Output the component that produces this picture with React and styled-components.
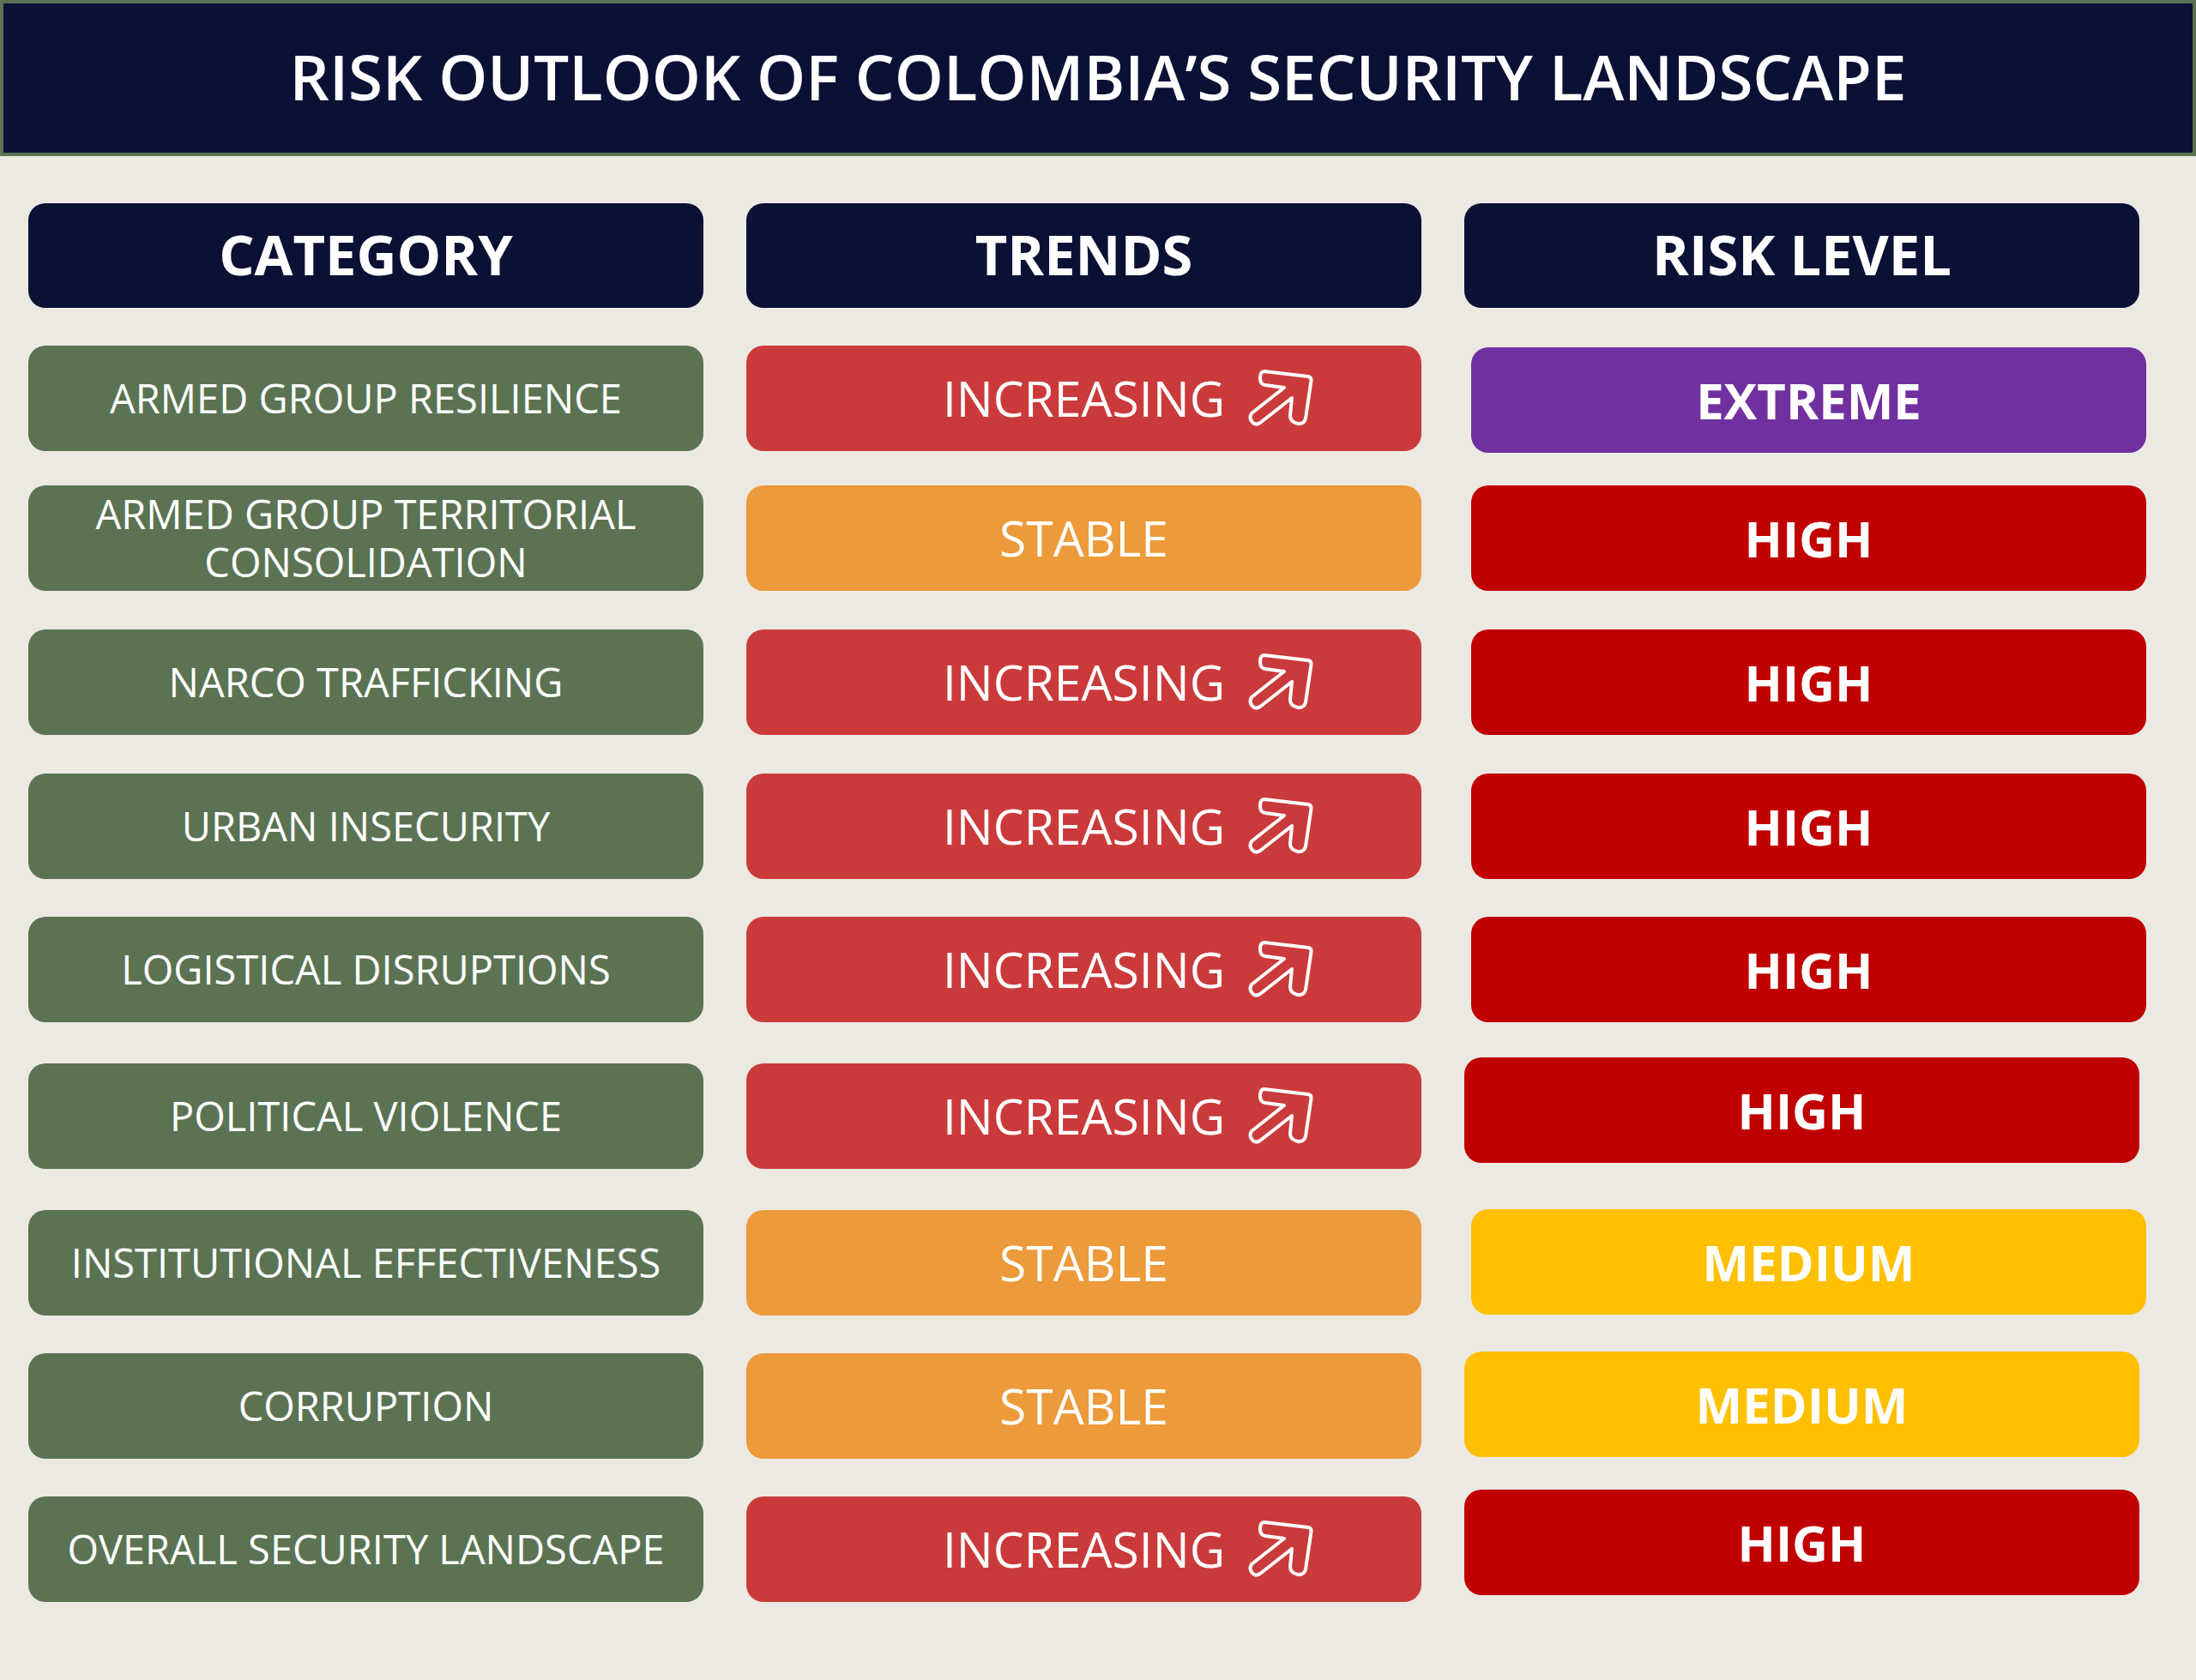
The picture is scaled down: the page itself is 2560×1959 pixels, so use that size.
import React from 'react'
import styled, { createGlobalStyle } from 'styled-components'

const GlobalStyle = createGlobalStyle`
    html, body {
        margin: 0;
        padding: 0;
        background: #ece9e2;
    }
    body {
        font-family: "Open Sans", "Noto Sans", sans-serif;
    }
`;

const Page = styled.div`
    width: 2560px;
    min-height: 1959px;
    background: #ece9e2;
    box-sizing: border-box;
`;

const TitleBar = styled.header`
    height: 182px;
    box-sizing: border-box;
    border: 4px solid #5b7353;
    background: #0b1035;
    color: #ffffff;
    display: flex;
    align-items: center;
    justify-content: center;
    font-size: 72.6px;
    font-weight: 600;
    padding-bottom: 6px;
`;

const Table = styled.section`
    padding: 55px 0 0 33px;
`;

const Row = styled.div`
    display: grid;
    grid-template-columns: repeat(3, 787px);
    column-gap: 50px;
    margin-top: ${props => props.$gap || 0}px;
`;

const Cell = styled.div`
    height: ${props => props.$h || 123}px;
    box-sizing: border-box;
    border-radius: 20px;
    background: ${props => props.$bg};
    color: #ffffff;
    display: flex;
    align-items: center;
    justify-content: center;
    text-align: center;
`;

const HeaderCell = styled(Cell)`
    font-size: 65px;
    font-weight: 700;
    padding-bottom: 4px;
`;

const CategoryCell = styled(Cell)`
    font-size: 47px;
    line-height: 56px;
    padding: 0 30px 2px;
`;

const TrendCell = styled(Cell)`
    font-size: 57px;
    padding-bottom: 2px;
`;

const RiskCell = styled(Cell)`
    font-size: 58px;
    font-weight: 700;
    margin: ${p => p.$dy || 0}px ${p => -(p.$dx || 0)}px ${p => -(p.$dy || 0)}px ${p => p.$dx || 0}px;
`;

const TrendLabel = styled.span`
    position: relative;
`;

const ArrowMark = styled.svg`
    position: absolute;
    left: calc(100% + 25px);
    top: 50%;
    margin-top: -36px;
`;

const colors = {
    navy: '#0b1035',
    green: '#5b7353',
    red: '#cb3a3a',
    orange: '#ec9a3a',
    purple: '#7030a0',
    darkRed: '#c00000',
    gold: '#ffc000',
}

const trendColor = { INCREASING: colors.red, STABLE: colors.orange }
const riskColor = { EXTREME: colors.purple, HIGH: colors.darkRed, MEDIUM: colors.gold }

const rows = [
    { gap: 44, category: 'ARMED GROUP RESILIENCE', trend: 'INCREASING', risk: 'EXTREME', dx: 8, dy: 2 },
    { gap: 40, category: 'ARMED GROUP TERRITORIAL CONSOLIDATION', trend: 'STABLE', risk: 'HIGH', dx: 8, dy: 0 },
    { gap: 45, category: 'NARCO TRAFFICKING', trend: 'INCREASING', risk: 'HIGH', dx: 8, dy: 0 },
    { gap: 45, category: 'URBAN INSECURITY', trend: 'INCREASING', risk: 'HIGH', dx: 8, dy: 0 },
    { gap: 44, category: 'LOGISTICAL DISRUPTIONS', trend: 'INCREASING', risk: 'HIGH', dx: 8, dy: 0 },
    { gap: 48, category: 'POLITICAL VIOLENCE', trend: 'INCREASING', risk: 'HIGH', dx: 0, dy: -7 },
    { gap: 48, category: 'INSTITUTIONAL EFFECTIVENESS', trend: 'STABLE', risk: 'MEDIUM', dx: 8, dy: -1 },
    { gap: 44, category: 'CORRUPTION', trend: 'STABLE', risk: 'MEDIUM', dx: 0, dy: -2 },
    { gap: 44, category: 'OVERALL SECURITY LANDSCAPE', trend: 'INCREASING', risk: 'HIGH', dx: 0, dy: -8 },
]

const UpRightArrow = () => (
    <ArrowMark width="78" height="70" viewBox="-2 -3 78 70" fill="none">
        <path
            d="M19 2 L70 8 Q74 9 73.5 13 L67 57 Q65 64 58 63 Q49 61 49 54 L51 33 L14 62 Q8 66 4 60 Q1 56 4 51 L42 21 L20 18 Q14 17 14 10 Q14 2 19 2 Z"
            stroke="#ffffff"
            strokeWidth="4"
            strokeLinejoin="round"
        />
    </ArrowMark>
)

const App = () => {
    return (
        <Page>
            <GlobalStyle />
            <TitleBar>RISK OUTLOOK OF COLOMBIA’S SECURITY LANDSCAPE</TitleBar>
            <Table>
                <Row>
                    <HeaderCell $bg={colors.navy} $h={122}>CATEGORY</HeaderCell>
                    <HeaderCell $bg={colors.navy} $h={122}>TRENDS</HeaderCell>
                    <HeaderCell $bg={colors.navy} $h={122}>RISK LEVEL</HeaderCell>
                </Row>
                {rows.map((row) => (
                    <Row key={row.category} $gap={row.gap}>
                        <CategoryCell $bg={colors.green}>{row.category}</CategoryCell>
                        <TrendCell $bg={trendColor[row.trend]}>
                            <TrendLabel>
                                {row.trend}
                                {row.trend === 'INCREASING' && <UpRightArrow />}
                            </TrendLabel>
                        </TrendCell>
                        <RiskCell $bg={riskColor[row.risk]} $dx={row.dx} $dy={row.dy}>
                            {row.risk}
                        </RiskCell>
                    </Row>
                ))}
            </Table>
        </Page>
    )
}

export default App
